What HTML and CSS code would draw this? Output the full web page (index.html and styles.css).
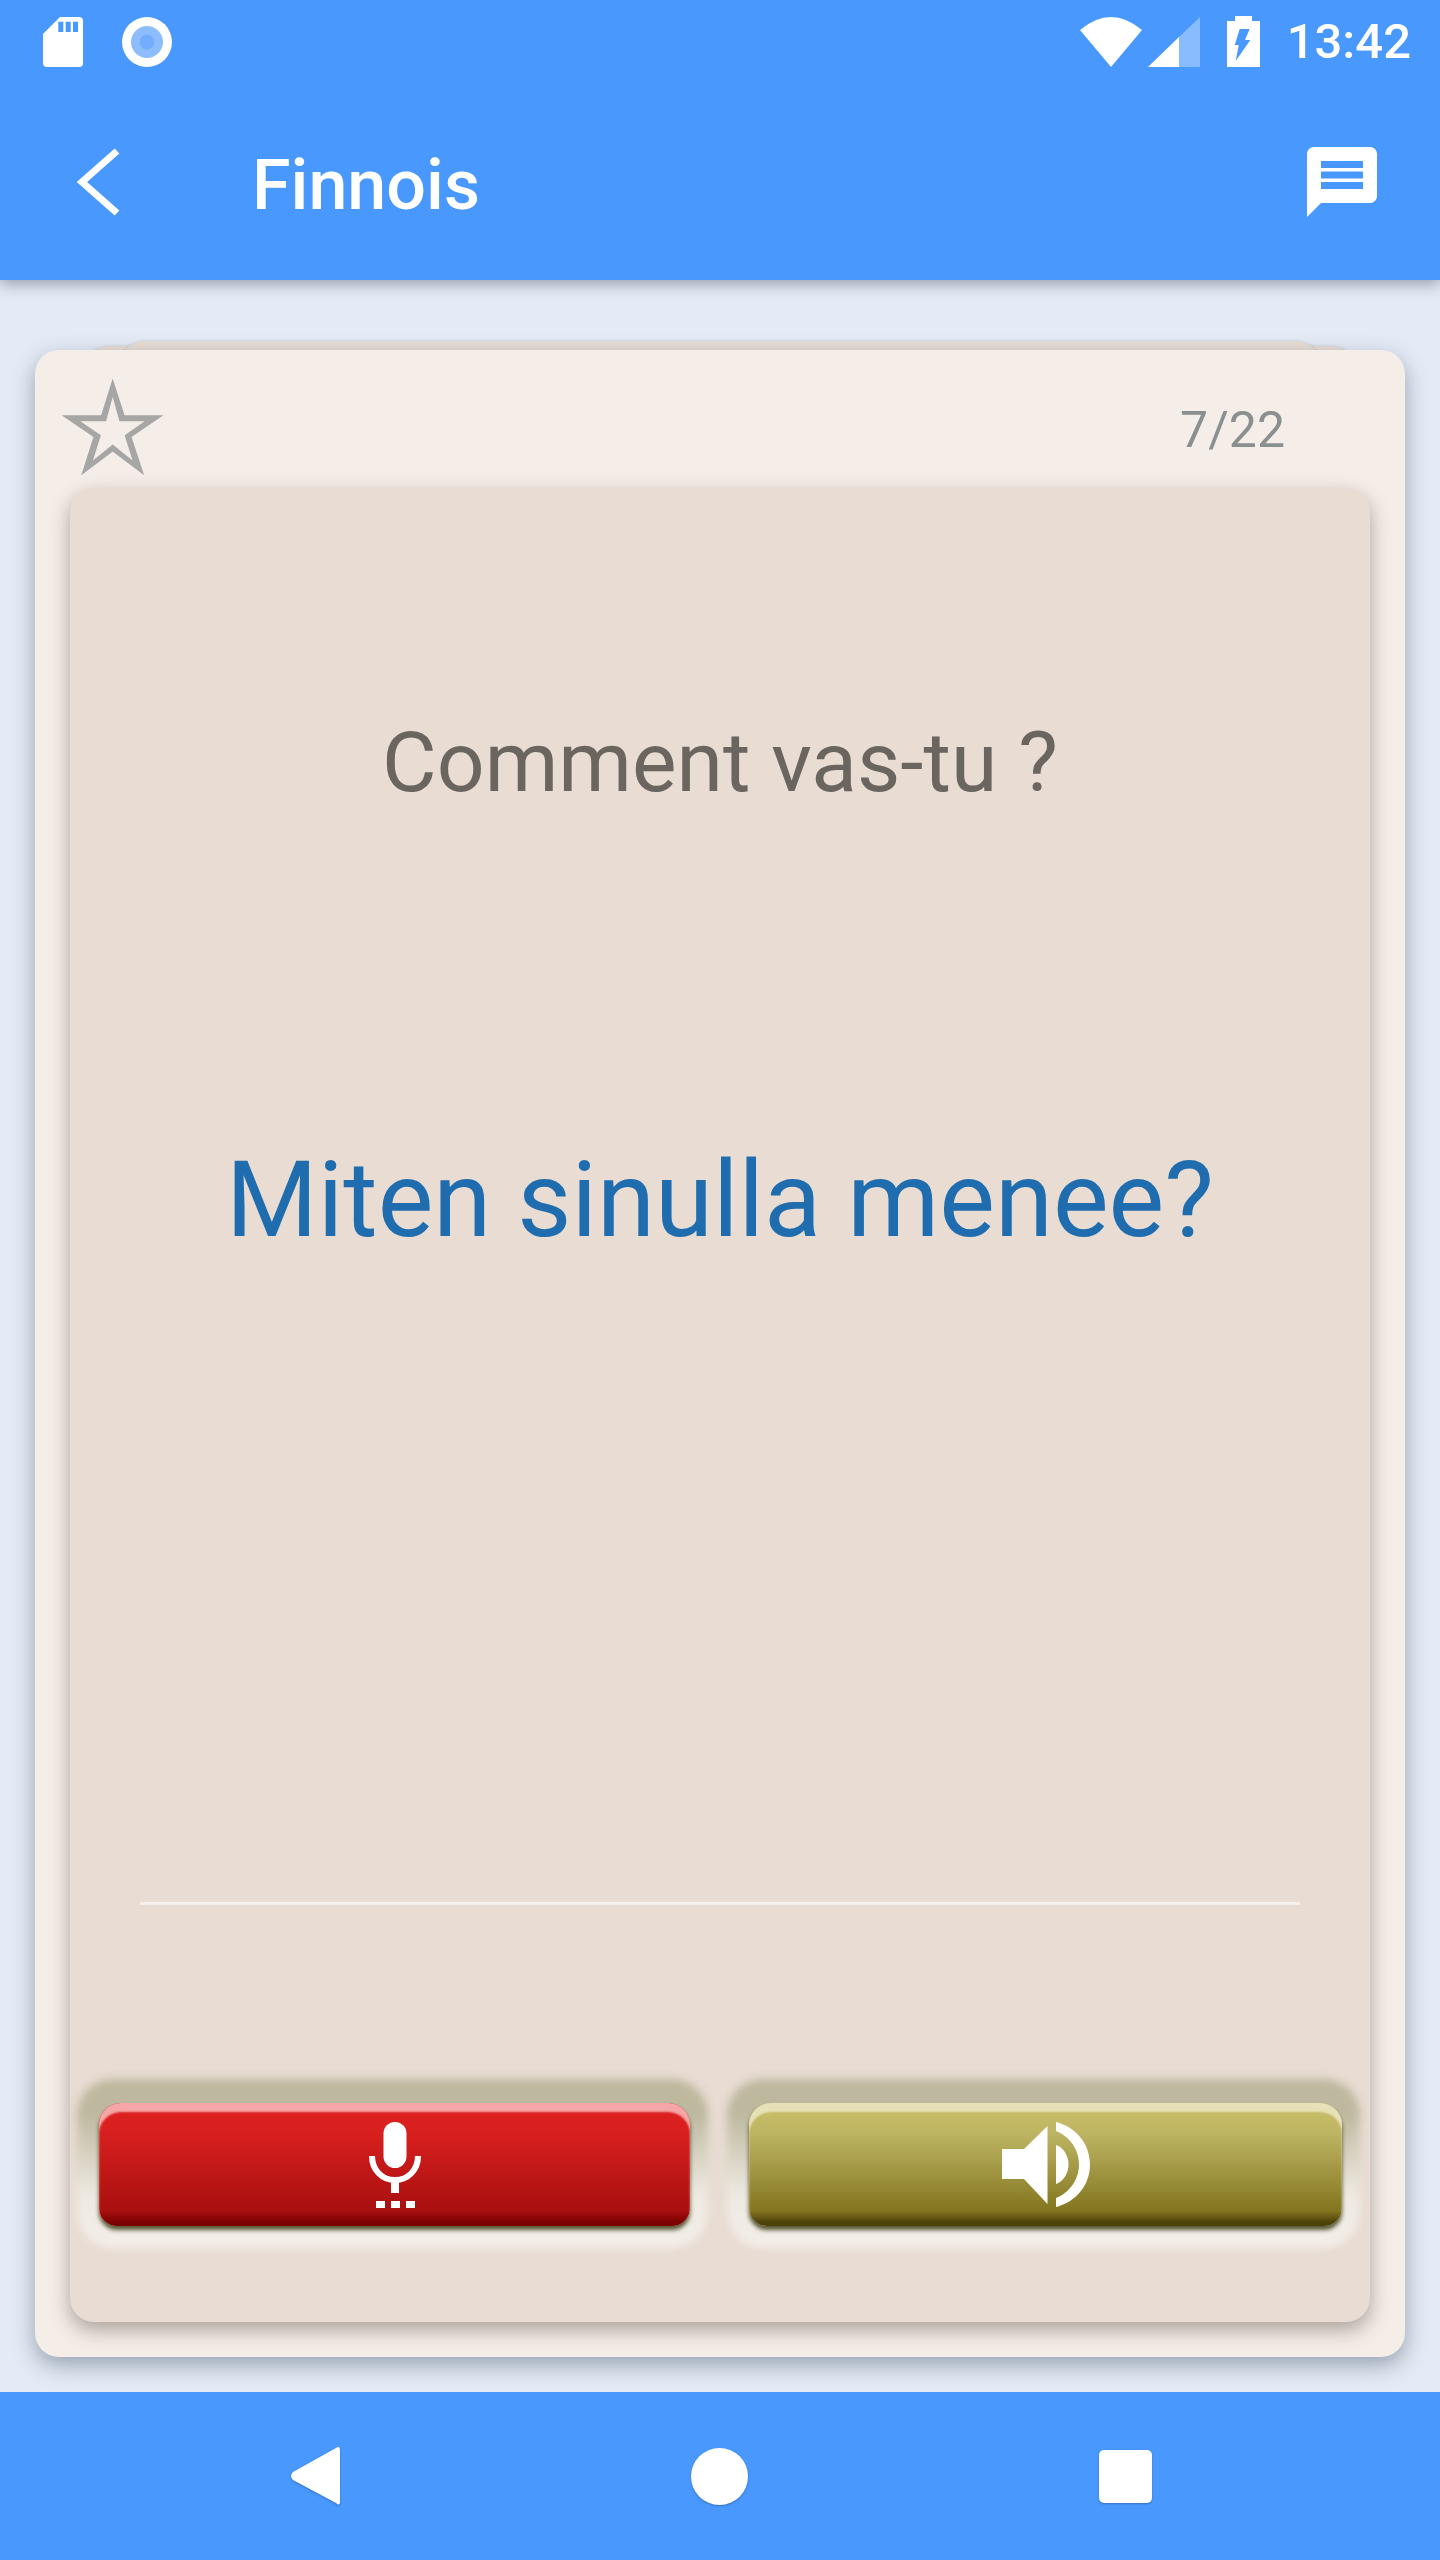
FILE: index.html
```html
<!DOCTYPE html>
<html lang="fr">
<head>
  <meta charset="UTF-8" />
  <meta name="viewport" content="width=device-width, initial-scale=1.0" />
  <title>Finnois</title>
  <link rel="stylesheet" href="styles.css">
</head>
<body>
  <header class="topbar">
    <div class="status">
      <svg class="ic-sd" viewBox="0 0 40 50" width="40" height="50">
        <path fill="#fff" fill-rule="evenodd" d="M17 0H36q4 0 4 4V46q0 4-4 4H4q-4 0-4-4V17ZM15.3 4.7V15H20.3V4.7ZM22.7 4.7V15H27.7V4.7ZM30 4.7V15H35V4.7Z"/>
      </svg>
      <svg class="ic-rec" viewBox="0 0 50 50" width="50" height="50">
        <circle cx="25" cy="25" r="25" fill="#fff"/>
        <circle cx="25" cy="25" r="16" fill="#8ebdfd"/>
        <circle cx="25" cy="25" r="7.5" fill="#74adfd"/>
      </svg>
      <div class="status-right">
        <svg class="ic-wifi" viewBox="0 0 62 50" width="62" height="50">
          <path fill="#fff" d="M0 13Q31-13 62 13L31 50Z"/>
        </svg>
        <svg class="ic-signal" viewBox="0 0 52 50" width="52" height="50">
          <path fill="#fff" fill-opacity=".35" d="M31 20L52 0V50H31Z"/>
          <path fill="#fff" d="M0 50L31 20V50Z"/>
        </svg>
        <svg class="ic-batt" viewBox="0 0 33 51" width="33" height="51">
          <path fill="#fff" fill-rule="evenodd" d="M8 0H25V5H33V51H0V5H8ZM12.7 13L7.7 29H11.7L8.7 45L23.3 24H18L22.7 13Z"/>
        </svg>
        <span class="clock">13:42</span>
      </div>
    </div>
    <div class="toolbar">
      <svg class="ic-back" viewBox="0 0 44 70" width="44" height="70">
        <path fill="none" stroke="#fff" stroke-width="7" d="M40 4L5 35L40 66"/>
      </svg>
      <h1 class="title">Finnois</h1>
      <svg class="ic-chat" viewBox="0 0 24 24" width="84" height="84">
        <path fill="#fff" d="M20 2H4c-1.1 0-1.99.9-1.99 2L2 22l4-4h14c1.1 0 2-.9 2-2V4c0-1.1-.9-2-2-2zM18 14H6v-2h12v2zm0-3H6V9h12v2zm0-3H6V6h12v2z"/>
      </svg>
    </div>
  </header>

  <main class="content">
    <section class="card">
      <div class="card-head">
        <svg class="ic-star" viewBox="0 0 97 93" width="97" height="93">
          <path fill="#a6a6a5" stroke="#a6a6a5" stroke-width="1.5" fill-rule="evenodd" d="M48.7 0L60 35H97L66.7 55.7L78.7 92.3L48.7 69.7L18.7 92.3L30.3 55.7L0 35H37.7ZM48.7 13L41.5 39.5H14L36 54.5L27.5 81.5L48.7 64.5L70 81.5L61.5 54.5L83 39.5H56Z"/>
        </svg>
        <span class="count">7/22</span>
      </div>
      <div class="card-body">
        <p class="question">Comment vas-tu ?</p>
        <p class="answer">Miten sinulla menee?</p>
        <div class="divider"></div>
        <div class="actions">
          <div class="well">
            <button class="btn btn-red">
              <svg viewBox="0 0 52 86" width="52" height="86">
                <rect x="14.5" y="0" width="23" height="46" rx="11.5" fill="#fff"/>
                <path fill="none" stroke="#fff" stroke-width="6" d="M3 34C3 48 13 58 26 58S49 48 49 34"/>
                <rect x="22" y="58" width="8" height="13" fill="#fff"/>
                <rect x="7" y="79" width="9" height="7" fill="#fff"/>
                <rect x="22" y="79" width="9" height="7" fill="#fff"/>
                <rect x="37" y="79" width="9" height="7" fill="#fff"/>
              </svg>
            </button>
          </div>
          <div class="well">
            <button class="btn btn-olive">
              <svg viewBox="0 0 88 85" width="88" height="85">
                <path fill="#fff" d="M0 27H22L45.5 4V82L22 57H0Z"/>
                <path fill="#fff" d="M54 0C74 5 88 22 88 42.5S74 80 54 85V76C67 71 77 58 77 42.5S67 14 54 9Z"/>
                <path fill="#fff" d="M54 23C62 26 66.5 34 66.5 42.5S62 59 54 62Z"/>
              </svg>
            </button>
          </div>
        </div>
      </div>
    </section>
  </main>

  <nav class="navbar">
    <div class="nav-cell">
      <svg class="nav-ic" viewBox="0 0 50 58" width="50" height="58">
        <path fill="#fff" d="M46 1Q50-2 50 4V54Q50 60 46 56L3 33Q-1 29 3 25Z"/>
      </svg>
    </div>
    <div class="nav-cell"><span class="nav-circle"></span></div>
    <div class="nav-cell"><span class="nav-square"></span></div>
  </nav>
</body>
</html>
```

FILE: styles.css
```css
* {
  margin: 0;
  padding: 0;
  box-sizing: border-box;
  font-family: 'Roboto', sans-serif;
}

body {
  width: 1440px;
  height: 2560px;
  display: flex;
  flex-direction: column;
  background: #e4ebf6;
  overflow: hidden;
}

svg {
  display: block;
  flex-shrink: 0;
  overflow: visible;
}

.topbar {
  height: 280px;
  background: #4898fe;
  color: white;
  box-shadow: 0 4px 14px rgba(30, 40, 60, 0.4);
  position: relative;
  z-index: 2;
}

.status {
  height: 84px;
  padding: 17px 29px 0 43px;
  display: flex;
  align-items: flex-start;
}

.ic-rec {
  margin-left: 39px;
}

.status-right {
  margin-left: auto;
  display: flex;
  align-items: flex-start;
}

.ic-signal {
  margin-left: 6px;
}

.ic-batt {
  margin-left: 27px;
  margin-top: -1px;
}

.clock {
  margin-left: 27px;
  font-size: 49px;
  line-height: 50px;
  font-weight: 500;
}

.toolbar {
  height: 196px;
  padding: 0 63px 0 77px;
  display: flex;
  align-items: center;
}

.title {
  margin-left: 131px;
  padding-top: 5px;
  font-size: 70px;
  font-weight: 500;
}

.ic-chat {
  margin-left: auto;
  margin-right: -7px;
}

.content {
  flex: 1;
  padding: 70px 35px 35px;
  display: flex;
}

.card {
  flex: 1;
  position: relative;
  display: flex;
  flex-direction: column;
  background: #f5ede8;
  border-radius: 24px;
  box-shadow: 0 8px 22px rgba(60, 70, 90, 0.45);
}

/* the two sheets of the deck peeking out above the card */
.card::before,
.card::after {
  content: "";
  position: absolute;
  z-index: -1;
  height: 40px;
  background: #e8ded5;
  border-radius: 24px 24px 0 0;
  box-shadow: 0 0 3px rgba(60, 70, 90, 0.18);
}

.card::before {
  top: -4px;
  left: 50px;
  right: 50px;
}

.card::after {
  top: -9px;
  left: 85px;
  right: 85px;
}

.card-head {
  height: 138px;
  padding: 31px 120px 0 29px;
  display: flex;
  justify-content: space-between;
  align-items: flex-start;
}

.count {
  margin-top: 21px;
  font-size: 50px;
  line-height: 56px;
  color: #8a8f8f;
}

.card-body {
  flex: 1;
  margin: 0 35px 35px;
  padding-bottom: 75px;
  display: flex;
  flex-direction: column;
  background: #e8dcd3;
  border-radius: 24px;
  box-shadow: 0 8px 20px rgba(70, 60, 50, 0.42);
}

.question {
  margin-top: 225px;
  font-size: 84px;
  line-height: 100px;
  text-align: center;
  color: #6b6560;
}

.answer {
  margin-top: 318px;
  font-size: 105px;
  line-height: 140px;
  text-align: center;
  color: #1f6dae;
}

.divider {
  height: 3px;
  margin: auto 70px 175px;
  background: #f5f0ec;
}

.actions {
  display: grid;
  grid-template-columns: 625px 627px;
  gap: 25px;
  padding-left: 9px;
}

.well {
  position: relative;
  padding: 23px 14px 21px 20px;
}

.well::before {
  content: "";
  position: absolute;
  inset: -1px -4px -1px -2px;
  border-radius: 36px;
  background: linear-gradient(#bdb89e 0, #bdb89e 20%, #eee9e1 68%, #f4eee9 100%);
  filter: blur(4px);
}

.btn {
  position: relative;
  width: 100%;
  height: 123px;
  display: flex;
  align-items: center;
  justify-content: center;
  border: none;
  border-radius: 22px 22px 18px 18px;
  cursor: pointer;
}

.btn-red {
  background: linear-gradient(#dc2020 10%, #d81f1f 25%, #a80f0f 88%, #7a0000 97%);
  box-shadow: inset 0 9px 2px #f6a6a6, 0 4px 4px rgba(60, 60, 20, 0.85);
}

.btn-olive {
  background: linear-gradient(#c6bb65 10%, #bdb463 25%, #82751f 88%, #4d410a 97%);
  box-shadow: inset 0 9px 2px #e7e1b8, 0 4px 4px rgba(60, 60, 20, 0.85);
}

.navbar {
  height: 168px;
  padding: 0 112px;
  display: grid;
  grid-template-columns: repeat(3, 1fr);
  background: #4898fe;
}

.nav-cell {
  display: flex;
  align-items: center;
  justify-content: center;
}

.nav-ic {
  filter: drop-shadow(0 1px 1px rgba(0, 0, 0, 0.25));
}

.nav-circle {
  width: 57px;
  height: 57px;
  border-radius: 50%;
  background: white;
  box-shadow: 0 1px 2px rgba(0, 0, 0, 0.25);
}

.nav-square {
  width: 53px;
  height: 53px;
  border-radius: 5px;
  background: white;
  box-shadow: 0 1px 2px rgba(0, 0, 0, 0.25);
}
```
